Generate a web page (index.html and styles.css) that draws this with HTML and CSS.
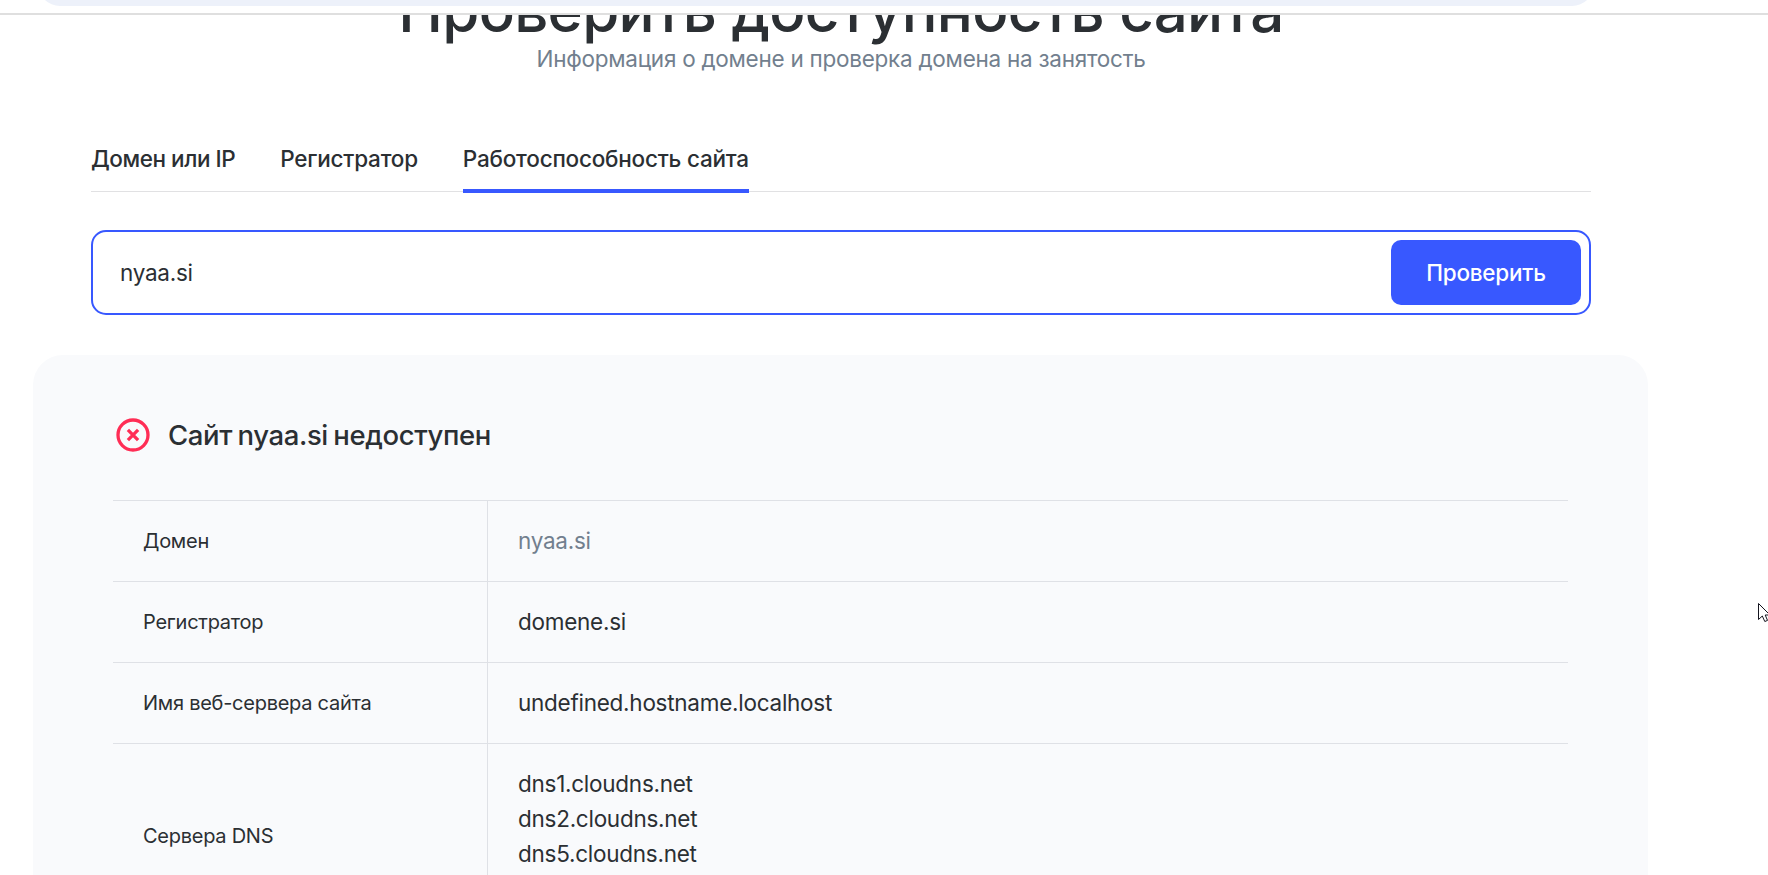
FILE: index.html
```html
<!DOCTYPE html>
<html lang="ru">
<head>
    <meta charset="UTF-8">
    <meta name="viewport" content="width=device-width, initial-scale=1.0">
    <title>Проверить доступность сайта</title>
    <link rel="stylesheet" href="styles.css">
</head>
<body>
    <div class="browser-bar">
        <div class="address"></div>
    </div>

    <main class="page">
        <div class="container">
            <h1>Проверить доступность сайта</h1>
            <p class="subtitle">Информация о домене и проверка домена на занятость</p>

            <nav class="tabs">
                <a class="tab tab-ip">Домен или IP</a>
                <a class="tab">Регистратор</a>
                <a class="tab active">Работоспособность сайта</a>
            </nav>

            <form class="search">
                <input type="text" class="search-input" value="nyaa.si">
                <button type="button" class="btn">Проверить</button>
            </form>
        </div>

        <section class="result">
            <div class="result-title">
                <svg class="icon" width="40" height="40" viewBox="0 0 40 40" fill="none" stroke="#ff2d55">
                    <circle cx="20" cy="20" r="15" stroke-width="3.3"/>
                    <path d="M14.9 14.9l10.2 10.2M25.1 14.9l-10.2 10.2" stroke-width="3.3"/>
                </svg>
                <h2>Сайт nyaa.si недоступен</h2>
            </div>

            <div class="table">
                <div class="row">
                    <div class="label">Домен</div>
                    <div class="value muted">nyaa.si</div>
                </div>
                <div class="row">
                    <div class="label">Регистратор</div>
                    <div class="value">domene.si</div>
                </div>
                <div class="row">
                    <div class="label">Имя веб-сервера сайта</div>
                    <div class="value">undefined.hostname.localhost</div>
                </div>
                <div class="row row-dns">
                    <div class="label">Сервера DNS</div>
                    <div class="value">dns1.cloudns.net<br>dns2.cloudns.net<br>dns5.cloudns.net</div>
                </div>
            </div>
        </section>
    </main>

    <svg class="cursor" width="10" height="20" viewBox="0 0 10 20">
        <path d="M.5 .5V16.5L4.3 13L6.8 18.5L9.5 17.4L7.2 12H12Z" fill="#fff" stroke="#14141e"/>
    </svg>
</body>
</html>
```
FILE: styles.css
```css
* {
    box-sizing: border-box;
}
body {
    margin: 0;
    height: 875px;
    overflow: hidden;
    display: flex;
    flex-direction: column;
    position: relative;
    font-family: Inter, sans-serif;
    font-size: 22.5px;
    font-weight: 400;
    line-height: 35px;
    letter-spacing: -0.26px;
    color: #2b2f33;
    background: #fff;
}
.browser-bar {
    flex: none;
    height: 15px;
    overflow: hidden;
    border-bottom: 2px solid #dfdfdf;
}
.address {
    height: 44px;
    margin: -38px 174px 0 38px;
    border-radius: 22px;
    background: #edf1fa;
}
.page {
    flex: 1;
    min-height: 0;
    overflow: hidden;
}
.container {
    width: 1500px;
    margin-left: 91px;
}
/* scrolled up, the heading is partly under the browser bar */
h1 {
    margin: -35px 0 1px;
    font-size: 60px;
    font-weight: 500;
    line-height: 60px;
    letter-spacing: -0.7px;
    text-align: center;
}
.subtitle {
    margin: 0 0 65px;
    color: #727f8e;
    text-align: center;
}
.tabs {
    display: flex;
    gap: 45px;
    border-bottom: 1px solid #e1e1e3;
    font-weight: 500;
    letter-spacing: -0.01em;
}
.tab {
    padding-bottom: 13px;
    margin-bottom: -2px;
    border-bottom: 4px solid transparent;
}
.tab-ip {
    letter-spacing: -0.02em;
}
.tab.active {
    border-bottom-color: #3858ff;
}
.search {
    display: flex;
    height: 85px;
    margin-top: 38px;
    padding: 8px;
    border: 2px solid #3858ff;
    border-radius: 15px;
}
.search-input {
    flex: 1;
    padding: 0 19px;
    border: none;
    outline: none;
    background: none;
    font: inherit;
    letter-spacing: inherit;
    color: inherit;
}
.btn {
    width: 190px;
    border: none;
    border-radius: 10px;
    background: #3858ff;
    color: #fff;
    font: inherit;
    font-weight: 500;
    letter-spacing: -0.01em;
}
.result {
    width: 1615px;
    height: 700px;
    margin: 40px 0 0 33px;
    padding: 60px 80px;
    border-radius: 30px;
    background: #f9fafc;
}
.result-title {
    display: flex;
    gap: 15px;
    margin-bottom: 45px;
}
h2 {
    margin: 0;
    font-size: 27.5px;
    font-weight: 500;
    line-height: 40px;
    letter-spacing: -0.38px;
    word-spacing: -1.5px;
}
.table {
    width: 1455px;
}
.row {
    display: flex;
    border-top: 1px solid #dfe1e6;
}
.label {
    display: flex;
    align-items: center;
    width: 374px;
    padding: 0 30px;
    font-size: 20px;
}
.value {
    flex: 1;
    padding: 22px 30px 23px;
    border-left: 1px solid #dfe1e6;
}
.row-dns {
    height: 186px;
}
.muted {
    color: #727f8e;
}
.cursor {
    position: absolute;
    left: 1758px;
    top: 603px;
}
```
